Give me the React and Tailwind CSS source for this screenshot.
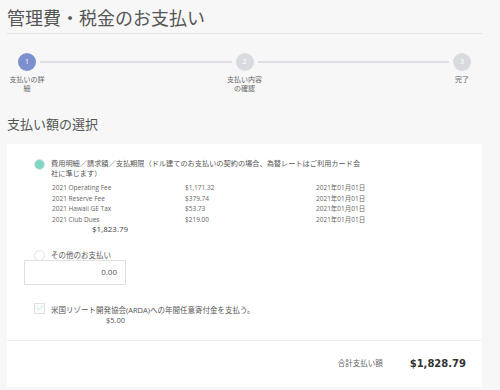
import { Check } from 'lucide-react'

const steps = [
  { n: 1, label: '支払いの詳細', active: true },
  { n: 2, label: '支払い内容の確認' },
  { n: 3, label: '完了' },
]

const fees = [
  { name: '2021 Operating Fee', amount: '$1,171.32', due: '2021年01月01日' },
  { name: '2021 Reserve Fee', amount: '$379.74', due: '2021年01月01日' },
  { name: '2021 Hawaii GE Tax', amount: '$53.73', due: '2021年01月01日' },
  { name: '2021 Club Dues', amount: '$219.00', due: '2021年01月01日' },
]

function Step({ step }) {
  return (
    <div className="flex w-[40px] flex-col items-center">
      <div
        className={`flex h-[18px] w-[18px] items-center justify-center rounded-full text-[7px] text-white ${
          step.active ? 'bg-[#7c8fcf]' : 'bg-[#d7dadf]'
        }`}
      >
        {step.n}
      </div>
      <div className="mt-[4px] text-center text-[7px] leading-[9px] text-[#666]">{step.label}</div>
    </div>
  )
}

export default function App() {
  return (
    <div
      className="h-[390px] w-[500px] overflow-hidden bg-[#f7f7f7] pl-[7px] text-[#555]"
      style={{ fontFamily: '"Open Sans", "Noto Sans CJK JP", sans-serif' }}
    >
      <div className="w-[475px]">
        <h1 className="pt-[7px] text-[18px] leading-[22px] text-[#555]">管理費・税金のお支払い</h1>
        <div className="mt-[4px] h-px bg-[#e3e3e3]" />

        <div className="mt-[19px] flex items-start">
          <Step step={steps[0]} />
          <div className="mx-[-7px] mt-[8px] h-[2px] flex-1 bg-[#dcdfe3]" />
          <Step step={steps[1]} />
          <div className="mx-[-7px] mt-[8px] h-[2px] flex-1 bg-[#dcdfe3]" />
          <Step step={steps[2]} />
        </div>

        <h2 className="mt-[23px] text-[13px] leading-[16px] text-[#555]">支払い額の選択</h2>

        <div className="mt-[12px] bg-white">
          <div className="pb-[15px] pl-[27px] pr-[20px] pt-[14px]">
            <div className="flex items-start gap-[6px]">
              <span className="mt-[1px] h-[11px] w-[11px] shrink-0 rounded-full border border-[#e4e4e4] bg-[#7fd6c2]" />
              <div className="flex-1">
                <p className="w-[312px] text-[7.2px] leading-[10px] text-[#555]">
                  費用明細／請求額／支払期限（ドル建てのお支払いの契約の場合、為替レートはご利用カード会社に準じます）
                </p>
                <div className="mt-[5px] flex flex-col">
                  {fees.map((f) => (
                    <div key={f.name} className="flex text-[6.5px] leading-[10.7px] text-[#666]">
                      <span className="w-[134px] pl-[1px]">{f.name}</span>
                      <span className="w-[131px]">{f.amount}</span>
                      <span>{f.due}</span>
                    </div>
                  ))}
                </div>
                <div className="ml-[41px] mt-[-2px] text-[8px] leading-[10px] text-[#444]">$1,823.79</div>
              </div>
            </div>

            <div className="mt-[16px] flex items-center gap-[6px]">
              <span className="h-[11px] w-[11px] shrink-0 rounded-full border border-[#e2e2e2] bg-white" />
              <span className="text-[7.5px] leading-[10px]">その他のお支払い</span>
            </div>
            <div className="ml-[-10px] mt-[-1px] flex h-[25px] w-[102px] items-center justify-end border border-[#e0e0e0] pr-[8px] text-[8px] text-[#555]">
              0.00
            </div>

            <div className="mt-[20px] flex items-start gap-[6px]">
              <span className="mt-[-2px] flex h-[11px] w-[11px] shrink-0 items-center justify-center border border-[#e0e0e0] bg-[#fbfbfb]">
                <Check size={8} strokeWidth={1.5} className="text-[#7fd6c2]" />
              </span>
              <div>
                <div className="text-[7.5px] leading-[10px]">米国リゾート開発協会(ARDA)への年間任意寄付金を支払う。</div>
                <div className="ml-[55px] text-[7.5px] leading-[10px] text-[#555]">$5.00</div>
              </div>
            </div>
          </div>
          <div className="h-px bg-[#eeeeee]" />
          <div className="flex h-[46px] items-center justify-end pr-[16px]">
            <span className="text-[7.5px] text-[#666]">合計支払い額</span>
            <span
              className="ml-[27px] text-[10px] font-bold text-[#333]"
              style={{ fontFamily: '"DejaVu Sans", sans-serif' }}
            >
              $1,828.79
            </span>
          </div>
        </div>
      </div>
    </div>
  )
}
